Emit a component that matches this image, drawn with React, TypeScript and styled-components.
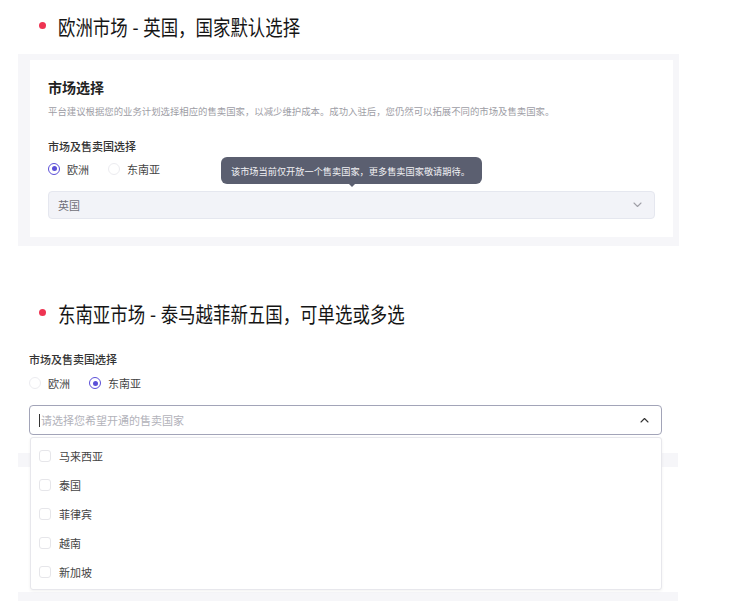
import React from "react";
import styled, { createGlobalStyle } from "styled-components";

const Global = createGlobalStyle`
  html, body { margin: 0; padding: 0; background: #ffffff; }
  body { font-family: "Noto Sans CJK SC", "Noto Sans", sans-serif; color: #333; }
  * { box-sizing: border-box; }
`;

const Page = styled.div`
  width: 739px;
  height: 612px;
  overflow: hidden;
  display: flex;
  flex-direction: column;
`;

const Heading = styled.div<{ $top: number }>`
  display: flex;
  align-items: center;
  gap: 12px;
  height: 30px;
  margin-top: ${(p) => p.$top}px;
  padding-left: 39px;
`;

const Dot = styled.span`
  width: 7px;
  height: 7px;
  border-radius: 50%;
  background: #ee3452;
  flex: none;
  margin-top: -1px;
`;

const HeadingText = styled.span`
  font-size: 21px;
  line-height: 30px;
  color: #151515;
  white-space: nowrap;
  word-spacing: 1px;
  transform: scaleX(0.83);
  transform-origin: left center;
`;

const Panel = styled.div`
  margin: 13px 0 0 18px;
  width: 661px;
  background: #f6f6f9;
  padding: 6px 6px 9px 12px;
`;

const Card = styled.div`
  background: #ffffff;
  padding: 17px 18px 18.5px 18px;
  display: flex;
  flex-direction: column;
`;

const Title = styled.div`
  font-size: 14px;
  line-height: 20px;
  font-weight: 700;
  color: #222;
`;

const Desc = styled.div`
  margin-top: 7px;
  font-size: 9.4px;
  line-height: 14px;
  color: #9d9da5;
  white-space: nowrap;
`;

const Label = styled.div<{ $top: number }>`
  margin-top: ${(p) => p.$top}px;
  font-size: 11px;
  line-height: 16px;
  font-weight: 500;
  color: #333;
`;

const RadioRow = styled.div<{ $top: number }>`
  margin-top: ${(p) => p.$top}px;
  display: flex;
  align-items: center;
  gap: 19px;
  height: 16px;
`;

const RadioItem = styled.label`
  display: flex;
  align-items: center;
  gap: 7px;
  font-size: 11px;
  line-height: 16px;
  color: #444;
`;

const RadioCircle = styled.span<{ $on: boolean }>`
  width: 12px;
  height: 12px;
  border-radius: 50%;
  border: 1px solid ${(p) => (p.$on ? "#5b4fd8" : "#ececf0")};
  display: flex;
  align-items: center;
  justify-content: center;
  &::after {
    content: "";
    width: 5px;
    height: 5px;
    border-radius: 50%;
    background: ${(p) => (p.$on ? "#5b4fd8" : "transparent")};
  }
`;

const FieldWrap = styled.div`
  position: relative;
  margin-top: 14px;
`;

const DisabledSelect = styled.div`
  height: 28px;
  background: #f2f3f8;
  border: 1px solid #e5e7ef;
  border-radius: 4px;
  display: flex;
  align-items: center;
  justify-content: space-between;
  padding: 0 12px 0 9px;
  font-size: 11px;
  color: #707078;
`;

const Tooltip = styled.div`
  position: absolute;
  left: 173px;
  bottom: calc(100% + 6.5px);
  width: 261px;
  height: 27px;
  border-radius: 6px;
  background: #5b5f70;
  color: #f1f1f4;
  font-size: 9.2px;
  display: flex;
  align-items: center;
  padding-left: 10px;
  white-space: nowrap;
  &::after {
    content: "";
    position: absolute;
    left: 128px;
    top: 100%;
    border: 3px solid transparent;
    border-top-color: #5b5f70;
  }
`;

const Section = styled.div`
  position: relative;
  padding-left: 29px;
  display: flex;
  flex-direction: column;
`;

const OpenSelect = styled.div`
  margin-top: 14px;
  width: 633px;
  height: 30px;
  border: 1px solid #a2a4b8;
  border-radius: 4px;
  display: flex;
  align-items: center;
  justify-content: space-between;
  padding: 0 12px 0 9px;
  background: #fff;
`;

const Placeholder = styled.span`
  display: flex;
  align-items: center;
  font-size: 11px;
  color: #b2b2ba;
  &::before {
    content: "";
    width: 1px;
    height: 13px;
    background: #333;
    margin-right: 1px;
  }
`;

const PanelPeek = styled.div`
  margin: 18px 0 0 -11px;
  width: 660px;
  height: 148px;
  background: #ffffff;
  border-top: 14px solid #f6f6f9;
  border-bottom: 9px solid #f6f6f9;
`;

const Dropdown = styled.div`
  position: absolute;
  left: 30px;
  top: 109.5px;
  width: 632px;
  height: 153px;
  background: #ffffff;
  border: 1px solid #e7e7ec;
  border-radius: 3px;
  box-shadow: 0 1px 3px rgba(0, 0, 0, 0.06);
  padding: 3px 0;
  display: flex;
  flex-direction: column;
`;

const Option = styled.div`
  height: 29.3px;
  display: flex;
  align-items: center;
  gap: 8px;
  padding-left: 8px;
  font-size: 11px;
  color: #444;
`;

const CheckBox = styled.span`
  width: 12px;
  height: 12px;
  border: 1px solid #e6e6ea;
  border-radius: 3px;
  background: #fff;
`;

const Chevron = ({ up, color }: { up?: boolean; color: string }) => (
  <svg width="9" height="6" viewBox="0 0 9 6" fill="none">
    <polyline
      points={up ? "1,5 4.5,1.5 8,5" : "1,1 4.5,4.5 8,1"}
      stroke={color}
      strokeWidth="1.1"
      strokeLinecap="round"
      strokeLinejoin="round"
    />
  </svg>
);

const countries = ["马来西亚", "泰国", "菲律宾", "越南", "新加坡"];

export default function App() {
  return (
    <Page>
      <Global />
      <Heading $top={11}>
        <Dot />
        <HeadingText>欧洲市场 - 英国，国家默认选择</HeadingText>
      </Heading>
      <Panel>
        <Card>
          <Title>市场选择</Title>
          <Desc>
            平台建议根据您的业务计划选择相应的售卖国家，以减少维护成本。成功入驻后，您仍然可以拓展不同的市场及售卖国家。
          </Desc>
          <Label $top={20}>市场及售卖国选择</Label>
          <RadioRow $top={6.5}>
            <RadioItem>
              <RadioCircle $on />
              欧洲
            </RadioItem>
            <RadioItem>
              <RadioCircle $on={false} />
              东南亚
            </RadioItem>
          </RadioRow>
          <FieldWrap>
            <Tooltip>该市场当前仅开放一个售卖国家，更多售卖国家敬请期待。</Tooltip>
            <DisabledSelect>
              <span>英国</span>
              <Chevron color="#a0a0a8" />
            </DisabledSelect>
          </FieldWrap>
        </Card>
      </Panel>
      <Heading $top={51.5}>
        <Dot />
        <HeadingText>东南亚市场 - 泰马越菲新五国，可单选或多选</HeadingText>
      </Heading>
      <Section>
        <Label $top={23.5}>市场及售卖国选择</Label>
        <RadioRow $top={8}>
          <RadioItem>
            <RadioCircle $on={false} />
            欧洲
          </RadioItem>
          <RadioItem>
            <RadioCircle $on />
            东南亚
          </RadioItem>
        </RadioRow>
        <OpenSelect>
          <Placeholder>请选择您希望开通的售卖国家</Placeholder>
          <Chevron up color="#333" />
        </OpenSelect>
        <PanelPeek />
        <Dropdown>
          {countries.map((c) => (
            <Option key={c}>
              <CheckBox />
              {c}
            </Option>
          ))}
        </Dropdown>
      </Section>
    </Page>
  );
}
